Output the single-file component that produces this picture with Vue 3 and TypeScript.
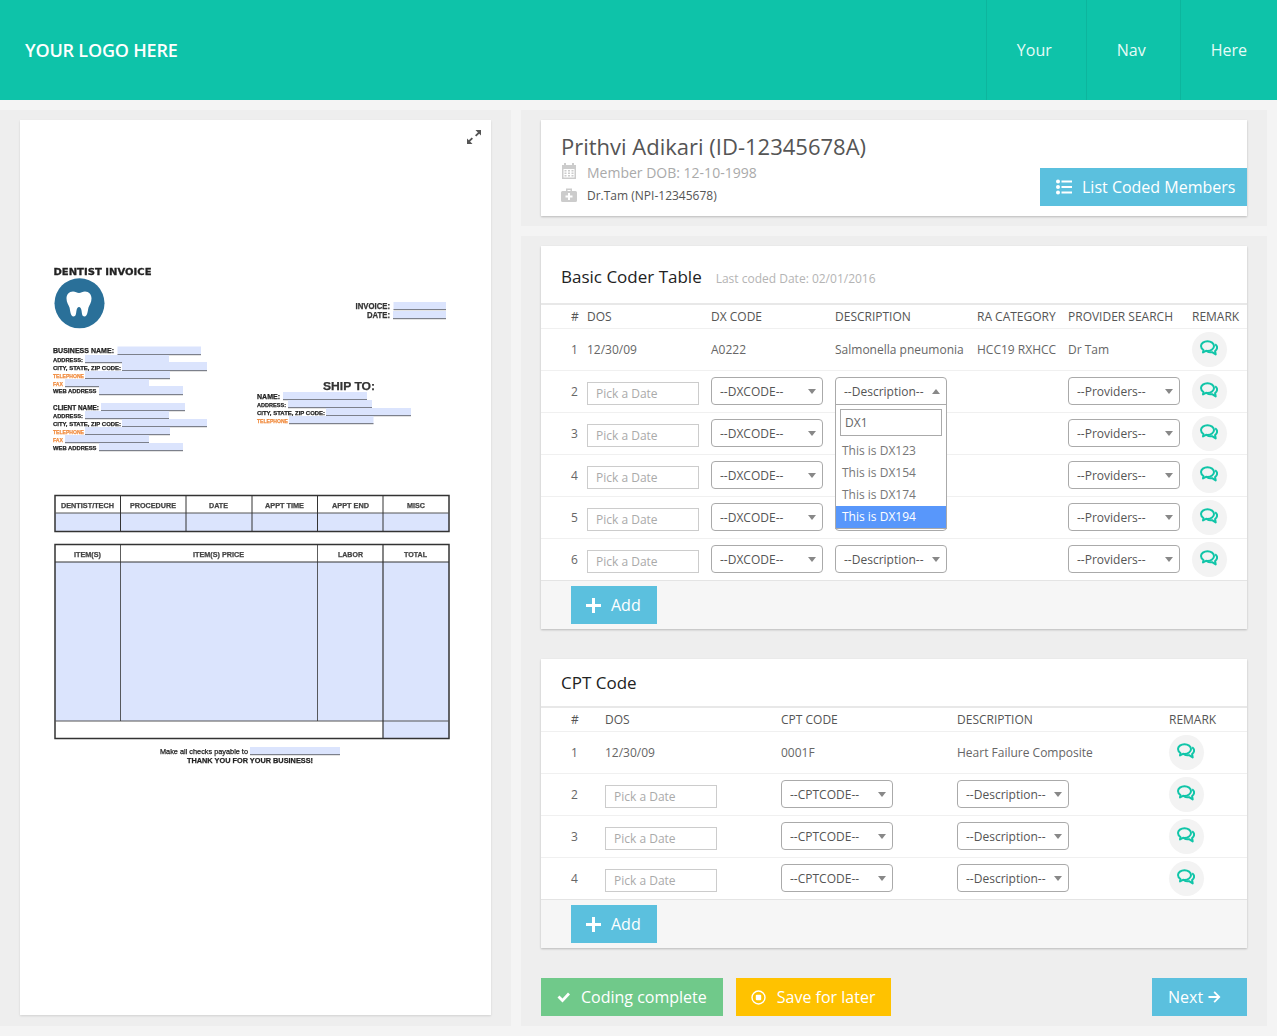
<script setup lang="ts">
import { ref } from "vue";

const openRow = ref(2);

const navItems = ["Your", "Nav", "Here"];
const dxRows = [2, 3, 4, 5, 6];
const cptRows = [2, 3, 4];
const dxOptions = ["This is DX123", "This is DX154", "This is DX174", "This is DX194"];

function toggle(row: number) {
  openRow.value = openRow.value === row ? 0 : row;
}

// rows whose description select sits under the open dropdown
function covered(row: number) {
  return openRow.value > 0 && row > openRow.value && row <= openRow.value + 3;
}

// invoice preview, numbers are page pixels (viewBox starts at the card corner)
const fields = [
  [393.5, 446, 302, 310], [393, 446, 311, 319],
  [117.5, 201, 346.5, 355], [85, 169, 355, 363], [122, 207, 362, 371], [85, 170, 371, 379],
  [65, 149, 379, 387], [99, 183, 386, 395], [101, 185, 403, 411], [85, 169, 411, 419],
  [122, 207, 419, 427], [85, 170, 427, 435], [65, 149, 435, 443], [99, 183, 443, 451],
  [283, 367, 392, 400], [288, 372, 400, 408], [326, 411, 408, 416], [289, 373.5, 416, 424],
  [250, 340, 747, 755],
];

const dark = "#222";
const orange = "#f08a3c";
const labels: [string, number, number, number, number, string][] = [
  ["INVOICE:", 355.5, 309, 34.5, 8.5, "#333"],
  ["DATE:", 367, 318, 23, 8.5, "#333"],
  ["BUSINESS NAME:", 53, 353, 61, 7, dark],
  ["ADDRESS:", 53, 361.5, 30, 6, dark],
  ["CITY, STATE, ZIP CODE:", 53, 369.5, 68, 6, dark],
  ["TELEPHONE", 53, 377.5, 31, 6, orange],
  ["FAX", 53, 385.5, 10, 6, orange],
  ["WEB ADDRESS", 53, 393, 43.5, 6, dark],
  ["CLIENT NAME:", 53, 409.5, 46, 7, dark],
  ["ADDRESS:", 53, 417.5, 30, 6, dark],
  ["CITY, STATE, ZIP CODE:", 53, 426, 68, 6, dark],
  ["TELEPHONE", 53, 433.5, 31, 6, orange],
  ["FAX", 53, 441.5, 10, 6, orange],
  ["WEB ADDRESS", 53, 449.5, 43.5, 6, dark],
  ["SHIP TO:", 323, 390, 52, 11.5, "#333"],
  ["NAME:", 257, 398.5, 23, 7, dark],
  ["ADDRESS:", 257, 406.5, 29, 6, dark],
  ["CITY, STATE, ZIP CODE:", 257, 415, 68, 6, dark],
  ["TELEPHONE", 257, 423, 31, 6, orange],
  ["DENTIST/TECH", 61, 508, 53, 7, "#444"],
  ["PROCEDURE", 130, 508, 46, 7, "#444"],
  ["DATE", 209, 508, 19, 7, "#444"],
  ["APPT TIME", 265, 508, 39, 7, "#444"],
  ["APPT END", 332, 508, 37, 7, "#444"],
  ["MISC", 407, 508, 18, 7, "#444"],
  ["ITEM(S)", 74, 556.5, 27, 7, "#444"],
  ["ITEM(S) PRICE", 193, 556.5, 51, 7, "#444"],
  ["LABOR", 338, 556.5, 25, 7, "#444"],
  ["TOTAL", 404, 556.5, 23, 7, "#444"],
  ["THANK YOU FOR YOUR BUSINESS!", 187, 763, 126, 7.5, dark],
];
</script>

<template>
  <div class="page">
    <header class="topbar">
      <div class="logo">YOUR LOGO HERE</div>
      <nav class="nav">
        <a v-for="item in navItems" :key="item" class="nav-item">{{ item }}</a>
      </nav>
    </header>

    <main class="main">
      <section class="doc-panel">
        <div class="doc-card">
          <svg class="expand" width="16" height="16" viewBox="0 0 16 16">
            <path d="M9.500 1H15v5.500l-1.800-1.800-2.900 2.900-1.300-1.300 2.900-2.900zM6.500 15H1V9.500l1.800 1.800 2.900-2.900 1.300 1.300-2.900 2.900z" fill="#555" />
          </svg>
          <svg class="invoice" width="471" height="895" viewBox="20 120 471 895">
            <text x="53.500" y="275" font-size="9.500" font-family="DejaVu Sans" font-weight="700" fill="#222" stroke="#222" stroke-width="0.300" textLength="98" lengthAdjust="spacingAndGlyphs">DENTIST INVOICE</text>
            <circle cx="79.500" cy="303.300" r="25" fill="#2a7099" />
            <path d="M73 291.500c-4 0-6.500 3-6.500 7 0 4 2 6 3 9 .8 3 1 9 4 9 2.500 0 2.500-3 3-6 .4-2 1.200-3.500 2.500-3.500s2.100 1.500 2.500 3.500c.5 3 .5 6 3 6 3 0 3.200-6 4-9 1-3 3-5 3-9 0-4-2.500-7-6.500-7-2.500 0-4 1.500-6 1.500s-3.500-1.500-6-1.500z" fill="#fff" />

            <g v-for="(f, i) in fields" :key="i">
              <rect :x="f[0]" :y="f[2]" :width="f[1] - f[0]" :height="f[3] - f[2]" fill="#dbe4fd" />
              <line :x1="f[0]" :x2="f[1]" :y1="f[3] - 0.3" :y2="f[3] - 0.3" stroke="#333" stroke-width="0.7" />
            </g>

            <rect x="55" y="513" width="394" height="18" fill="#dbe4fd" />
            <rect x="55" y="562" width="394" height="159" fill="#dbe4fd" />
            <rect x="383" y="721" width="66" height="18" fill="#dbe4fd" />
            <g fill="none" stroke="#333">
              <rect x="55" y="495.500" width="394" height="36" stroke-width="1.500" />
              <path d="M55 513h394" stroke="#555" />
              <path d="M120.500 495.500v36M186 495.500v36M252 495.500v36M317.500 495.500v36M383 495.500v36" />
              <rect x="55" y="544.500" width="394" height="194" stroke-width="1.500" />
              <path d="M55 562h394" />
              <path d="M55 721h394" stroke="#555" />
              <path d="M120.500 544.500v176.500M317.500 544.500v176.500" stroke-width="0.800" />
              <path d="M383 544.500v194" stroke-width="1.200" />
            </g>

            <text
              v-for="(l, i) in labels"
              :key="i"
              :x="l[1]"
              :y="l[2]"
              :textLength="l[3]"
              :font-size="l[4]"
              :fill="l[5]"
              :stroke="l[5]"
              stroke-width="0.250"
              lengthAdjust="spacingAndGlyphs"
              font-family="Liberation Sans"
              font-weight="700"
            >{{ l[0] }}</text>
            <text x="160" y="753.500" font-size="7.500" font-family="Liberation Sans" fill="#222" stroke="#222" stroke-width="0.250" textLength="88" lengthAdjust="spacingAndGlyphs">Make all checks payable to</text>
          </svg>
        </div>
      </section>

      <div class="right">
        <section class="panel">
          <div class="card member">
            <div class="member-info">
              <h1 class="member-name">Prithvi Adikari (ID-12345678A)</h1>
              <div class="member-line dob">
                <svg class="cal" width="16" height="16" viewBox="0 0 16 16">
                  <path d="M3 0h2v2h6V0h2v2h2v14H1V2h2z" fill="#ccc" />
                  <rect x="2.500" y="6" width="11" height="8.500" fill="#fff" />
                  <path d="M3.500 7h2v1.500h-2zM7 7h2v1.500H7zM10.500 7h2v1.500h-2zM3.500 9.500h2V11h-2zM7 9.500h2V11H7zM10.500 9.500h2V11h-2zM3.500 12h2v1.500h-2zM7 12h2v1.500H7zM10.500 12h2v1.500h-2z" fill="#ccc" />
                </svg>
                Member DOB: 12-10-1998
              </div>
              <div class="member-line npi">
                <svg class="kit" width="16" height="16" viewBox="0 0 16 16">
                  <path d="M5 1.500h6V4h3.500a1.500 1.500 0 0 1 1.500 1.500v8a1.500 1.500 0 0 1-1.500 1.500h-13A1.500 1.500 0 0 1 0 13.500v-8A1.500 1.500 0 0 1 1.500 4H5zM6.500 3v1h3V3z" fill="#ccc" fill-rule="evenodd" />
                  <path d="M7 6h2v2.500h2.500v2H9V13H7v-2.500H4.500v-2H7z" fill="#fff" />
                </svg>
                Dr.Tam (NPI-12345678)
              </div>
            </div>
            <button class="btn blue list-btn">
              <svg width="16" height="16" viewBox="0 0 16 16">
                <path d="M0 2.500a2 2 0 1 0 4 0 2 2 0 1 0-4 0zM0 8a2 2 0 1 0 4 0 2 2 0 1 0-4 0zM0 13.500a2 2 0 1 0 4 0 2 2 0 1 0-4 0z" fill="#fff" />
                <path d="M5.500 1.500H16v2H5.500zM5.500 7H16v2H5.500zM5.500 12.500H16v2H5.500z" fill="#fff" />
              </svg>
              List Coded Members
            </button>
          </div>
        </section>

        <section class="panel grow">
          <div class="card">
            <div class="card-title tall">
              <h2>Basic Coder Table</h2>
              <span class="last-coded">Last coded Date: 02/01/2016</span>
            </div>
            <div class="row dx head">
              <span>#</span><span>DOS</span><span>DX CODE</span><span>DESCRIPTION</span>
              <span>RA CATEGORY</span><span>PROVIDER SEARCH</span><span>REMARK</span>
            </div>
            <div class="row dx">
              <span>1</span><span>12/30/09</span><span>A0222</span><span>Salmonella pneumonia</span>
              <span>HCC19 RXHCC</span><span>Dr Tam</span>
              <span class="remark">
                <svg width="18" height="16" viewBox="0 0 18 16"><use href="#bubbles" /></svg>
              </span>
            </div>
            <div v-for="n in dxRows" :key="n" class="row dx">
              <span>{{ n }}</span>
              <input class="date" placeholder="Pick a Date" />
              <div class="sel"><span>--DXCODE--</span><i class="caret"></i></div>
              <div class="sel-wrap">
                <div class="sel" :class="{ open: openRow === n, covered: covered(n) }" @click="toggle(n)">
                  <span>--Description--</span><i class="caret"></i>
                </div>
                <div v-if="openRow === n" class="drop">
                  <input class="drop-search" value="DX1" />
                  <ul>
                    <li v-for="opt in dxOptions" :key="opt" :class="{ active: opt === 'This is DX194' }">{{ opt }}</li>
                  </ul>
                </div>
              </div>
              <span></span>
              <div class="sel"><span>--Providers--</span><i class="caret"></i></div>
              <span class="remark">
                <svg width="18" height="16" viewBox="0 0 18 16"><use href="#bubbles" /></svg>
              </span>
            </div>
            <div class="card-foot">
              <button class="btn blue">
                <svg width="15" height="15" viewBox="0 0 15 15"><path d="M6 0h3v6h6v3H9v6H6V9H0V6h6z" fill="#fff" /></svg>
                Add
              </button>
            </div>
          </div>

          <div class="card cpt-card">
            <div class="card-title"><h2>CPT Code</h2></div>
            <div class="row cpt head">
              <span>#</span><span>DOS</span><span>CPT CODE</span><span>DESCRIPTION</span><span>REMARK</span>
            </div>
            <div class="row cpt">
              <span>1</span><span>12/30/09</span><span>0001F</span><span>Heart Failure Composite</span>
              <span class="remark">
                <svg width="18" height="16" viewBox="0 0 18 16"><use href="#bubbles" /></svg>
              </span>
            </div>
            <div v-for="n in cptRows" :key="n" class="row cpt">
              <span>{{ n }}</span>
              <input class="date" placeholder="Pick a Date" />
              <div class="sel"><span>--CPTCODE--</span><i class="caret"></i></div>
              <div class="sel"><span>--Description--</span><i class="caret"></i></div>
              <span class="remark">
                <svg width="18" height="16" viewBox="0 0 18 16"><use href="#bubbles" /></svg>
              </span>
            </div>
            <div class="card-foot">
              <button class="btn blue">
                <svg width="15" height="15" viewBox="0 0 15 15"><path d="M6 0h3v6h6v3H9v6H6V9H0V6h6z" fill="#fff" /></svg>
                Add
              </button>
            </div>
          </div>

          <div class="actions">
            <button class="btn green">
              <svg width="15" height="12" viewBox="0 0 15 12"><path d="M1.500 6.500l2-2 3 3L12 1.500l2 2-7.500 8z" fill="#fff" /></svg>
              Coding complete
            </button>
            <button class="btn yellow">
              <svg width="15" height="15" viewBox="0 0 15 15">
                <circle cx="7.500" cy="7.500" r="6.500" fill="none" stroke="#fff" stroke-width="1.400" />
                <rect x="4.800" y="4.800" width="5.400" height="5.400" rx="1" fill="#fff" />
              </svg>
              Save for later
            </button>
            <button class="btn blue next">
              Next
              <svg width="13" height="12" viewBox="0 0 13 12"><path d="M0.500 5h8.500L5.500 1.500 6.800 0.200 12.500 6l-5.700 5.800-1.300-1.300L9 7H0.500z" fill="#fff" /></svg>
            </button>
          </div>
        </section>
      </div>
    </main>

    <svg width="0" height="0" class="defs">
      <symbol id="bubbles" viewBox="0 0 18 16">
        <g fill="none" stroke="#10c5a8" stroke-width="2" stroke-linejoin="round">
          <path d="M7.500 1.200C3.900 1.200 1 3.400 1 6.100c0 1.600 1 3 2.500 3.900L3 12.500l3-1.700c.5.100 1 .1 1.500.1 3.600 0 6.500-2.200 6.500-4.900S11.100 1.200 7.500 1.200z" />
          <path d="M15.200 4.200c1.200.9 1.900 2.100 1.900 3.400 0 1.400-.8 2.600-2 3.400l.6 3.500-3.600-2.300c-.6.100-1.100.1-1.700.1-1.200 0-2.400-.3-3.300-.8" />
        </g>
      </symbol>
    </svg>
  </div>
</template>

<style>
body {
  background: #f4f4f4;
}
</style>

<style scoped>
.page {
  font-family: "Open Sans", sans-serif;
  font-size: 12px;
  color: #666;
  width: 1277px;
  height: 1036px;
  overflow: hidden;
}

.defs {
  position: absolute;
}

.topbar {
  height: 100px;
  background: #0ec3a9;
  display: flex;
  justify-content: space-between;
  align-items: stretch;
  color: #fff;
}

.logo {
  padding-left: 25px;
  font-size: 18px;
  font-weight: 600;
  line-height: 100px;
  letter-spacing: -0.2px;
}

.nav {
  display: flex;
  gap: 4px;
}

.nav-item {
  padding: 0 30px;
  font-size: 16px;
  line-height: 100px;
  color: #e6fbf7;
  border-left: 1px solid rgba(0, 0, 0, 0.07);
}

.main {
  display: flex;
  align-items: flex-start;
  padding-top: 10px;
}

.doc-panel {
  width: 511px;
  height: 916px;
  box-sizing: border-box;
  padding: 10px 20px 11px;
  background: #eee;
  margin-right: 10px;
}

.doc-card {
  position: relative;
  height: 895px;
  background: #fff;
  box-shadow: 0 1px 2px rgba(0, 0, 0, 0.12);
}

.expand {
  position: absolute;
  top: 9px;
  right: 9px;
}

.invoice {
  display: block;
  filter: blur(0.4px);
}

.right {
  width: 746px;
  display: flex;
  flex-direction: column;
  gap: 10px;
}

.panel {
  background: #eee;
  padding: 10px 20px;
}

.card {
  background: #fff;
  box-shadow: 0 1px 2px rgba(0, 0, 0, 0.22);
}

.member {
  height: 96px;
  box-sizing: border-box;
  display: flex;
  justify-content: space-between;
  align-items: flex-start;
  padding: 11px 0 10px 20px;
}

.member-name {
  margin: 0;
  font-size: 22px;
  font-weight: 400;
  line-height: 31px;
  color: #555;
}

.member-line {
  display: flex;
  align-items: center;
  gap: 10px;
  line-height: 22px;
}

.dob {
  font-size: 14px;
  color: #aaa;
}

.cal {
  margin-top: -4px;
}

.npi {
  padding-top: 1px;
  font-size: 12px;
  font-weight: 500;
  color: #555;
}

.kit {
  margin-top: -2px;
}

.btn {
  height: 38px;
  border: 0;
  padding: 0 16px 0 15px;
  display: inline-flex;
  align-items: center;
  gap: 10px;
  color: #fff;
  font-family: inherit;
  font-size: 16px;
  cursor: pointer;
  white-space: nowrap;
}

.list-btn {
  align-self: flex-end;
  width: 207px;
  padding: 0 0 0 16px;
}

.blue {
  background: #5bc0de;
}

.green {
  background: #70c98a;
}

.yellow {
  background: #ffc200;
  gap: 11px;
}

.next {
  margin-left: auto;
  width: 95px;
  padding-left: 16px;
  gap: 5px;
}

.card-title {
  height: 49px;
  box-sizing: border-box;
  padding: 12px 20px 0;
  border-bottom: 2px solid #e8e8e8;
  display: flex;
  align-items: baseline;
  gap: 14px;
}

.card-title.tall {
  height: 59px;
  padding-top: 19px;
}

.card-title h2 {
  margin: 0;
  font-size: 17px;
  font-weight: 400;
  line-height: 24px;
  color: #222;
}

.last-coded {
  font-size: 12px;
  color: #b4b4b4;
}

.row {
  display: grid;
  align-items: center;
  height: 42px;
  box-sizing: border-box;
  padding-left: 30px;
  border-bottom: 1px solid #f0f0f0;
  white-space: nowrap;
}

.row.dx {
  grid-template-columns: 16px 124px 124px 142px 91px 124px 1fr;
}

.row.cpt {
  grid-template-columns: 34px 176px 176px 212px 1fr;
}

.row.head {
  height: 24px;
  color: #555;
}

.date {
  width: 112px;
  height: 23px;
  box-sizing: border-box;
  margin-top: 4px;
  padding: 0 8px;
  border: 1px solid #ccc;
  border-radius: 0;
  outline: 0;
  font-family: inherit;
  font-size: 12px;
  background: #fff;
}

.date::placeholder {
  color: #aaa;
}

.sel-wrap {
  position: relative;
}

.sel {
  position: relative;
  width: 112px;
  height: 28px;
  box-sizing: border-box;
  margin-bottom: 1px;
  padding-left: 8px;
  border: 1px solid #aaa;
  border-radius: 4px;
  line-height: 28px;
  color: #555;
  background: #fff;
  cursor: pointer;
}

.sel.open {
  border-radius: 4px 4px 0 0;
}

.sel.covered span {
  visibility: hidden;
}

.caret {
  position: absolute;
  right: 6px;
  top: 11px;
  border-left: 4px solid transparent;
  border-right: 4px solid transparent;
  border-top: 5px solid #888;
}

.sel.open .caret {
  border-top: 0;
  border-bottom: 5px solid #888;
}

.drop {
  position: absolute;
  z-index: 2;
  top: 27px;
  left: 0;
  width: 112px;
  box-sizing: border-box;
  height: 125px;
  border: 1px solid #aaa;
  background: #fff;
}

.drop-search {
  display: block;
  width: 102px;
  height: 27px;
  box-sizing: border-box;
  margin: 4px 0 4px 4px;
  padding: 0 4px;
  border: 1px solid #aaa;
  border-radius: 0;
  outline: 0;
  font-family: inherit;
  font-size: 12px;
  color: #666;
}

.drop ul {
  list-style: none;
  margin: 0;
  padding: 0;
}

.drop li {
  height: 22px;
  line-height: 22px;
  padding-left: 6px;
  color: #777;
}

.drop li.active {
  background: #5897fb;
  color: #fff;
}

.remark {
  width: 35px;
  height: 35px;
  border-radius: 50%;
  background: #f3f3f3;
  display: flex;
  align-items: center;
  justify-content: center;
}

.remark svg {
  margin-top: -3px;
  margin-left: -1px;
}

.row:has(+ .card-foot) {
  border-bottom-color: #e4e4e4;
}

.card-foot {
  height: 48px;
  box-sizing: border-box;
  padding: 5px 30px;
  background: #f6f6f6;
}

.cpt-card {
  margin-top: 30px;
}

.actions {
  display: flex;
  gap: 13px;
  margin-top: 30px;
}
</style>
